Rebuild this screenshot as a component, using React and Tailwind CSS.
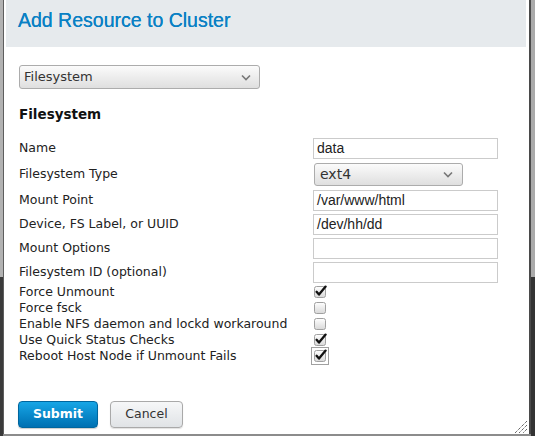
import React from "react";

function Chevron() {
  return (
    <svg width="10" height="7" viewBox="0 0 10 7" className="shrink-0">
      <path d="M1 1.5 L5 5.5 L9 1.5" fill="none" stroke="#777" strokeWidth="1.6" />
    </svg>
  );
}

function Checkbox({ checked, focus }) {
  const box = (
    <svg width="14" height="14" viewBox="0 0 14 14" className="block">
      <defs>
        <linearGradient id="cbg" x1="0" y1="0" x2="0" y2="1">
          <stop offset="0" stopColor="#ffffff" />
          <stop offset="1" stopColor="#d8d8d8" />
        </linearGradient>
      </defs>
      <rect x="1.5" y="1.5" width="11" height="11" rx="2" fill="url(#cbg)" stroke="#a0a0a0" strokeWidth="1" />
      {checked && (
        <path d="M3.6 6.8 L6 9.6 L12.6 1.6" fill="none" stroke="#111" strokeWidth="2.3" strokeLinecap="round" strokeLinejoin="round" />
      )}
    </svg>
  );
  if (!focus) return box;
  return (
    <div className="relative">
      {box}
      <div className="absolute -left-[2px] -top-[2px] w-[18px] h-[18px] border border-[#a0a0a0]" />
    </div>
  );
}

const fields = [
  { label: "Name", kind: "input", value: "data", row: "h-[24px]" },
  { label: "Filesystem Type", kind: "select", value: "ext4", row: "h-[28px]" },
  { label: "Mount Point", kind: "input", value: "/var/www/html", row: "h-[24px]" },
  { label: "Device, FS Label, or UUID", kind: "input", value: "/dev/hh/dd", row: "h-[24px]" },
  { label: "Mount Options", kind: "input", value: "", row: "h-[24px]" },
  { label: "Filesystem ID (optional)", kind: "input", value: "", row: "h-[24px]" },
];

const checks = [
  { label: "Force Unmount", checked: true },
  { label: "Force fsck", checked: false },
  { label: "Enable NFS daemon and lockd workaround", checked: false },
  { label: "Use Quick Status Checks", checked: true },
  { label: "Reboot Host Node if Unmount Fails", checked: true, focus: true },
];

export default function App() {
  return (
    <div className="w-[535px] h-[436px] overflow-hidden flex items-start bg-[#8c8c8c] font-['DejaVu_Sans',sans-serif]">
      <div className="w-[3px] h-[436px] flex flex-col shrink-0">
        <div className="h-[277px] bg-[#b2b2b2]" />
        <div className="flex-1 bg-[#3a3a3a]" />
      </div>

      <div className="relative w-[528px] h-[434px] shrink-0 bg-white border-l border-l-[#5e5e5e] border-r-2 border-r-[#4a4a4a] pl-[2px] pr-[3px] flex flex-col">
        <div className="h-[47px] bg-[#e6eaed] pl-[12px] pt-[7px]">
          <div className="font-['Liberation_Sans',Arial,sans-serif] text-[19.5px] leading-[26px] text-[#0a80c4] [text-shadow:0_0_0.4px_#0a80c4]">
            Add Resource to Cluster
          </div>
        </div>

        <div className="pl-[13px] flex flex-col">
          <div className="mt-[18px] w-[241px] h-[24px] rounded-[3px] border border-[#acacac] bg-linear-to-b from-[#fbfbfb] to-[#dfdfdf] flex items-center justify-between pl-[4px] pr-[8px] text-[13px] text-[#333]">
            <span>Filesystem</span>
            <Chevron />
          </div>

          <div className="mt-[15px] h-[20px] text-[13.5px] leading-[20px] font-bold text-[#111]">Filesystem</div>

          <div className="mt-[12px] flex flex-col">
            {fields.map((f) => (
              <div key={f.label} className={`flex items-center ${f.row}`}>
                <div className="w-[294px] text-[12.5px] text-[#222]">{f.label}</div>
                {f.kind === "input" ? (
                  <div className="w-[185px] h-[21px] border border-[#cbcbcb] bg-white px-[3px] flex items-center font-['Liberation_Sans',Arial,sans-serif] text-[14px] text-[#222]">
                    {f.value}
                  </div>
                ) : (
                  <div className="ml-[1px] w-[149px] h-[23px] rounded-[3px] border border-[#acacac] bg-linear-to-b from-[#fbfbfb] to-[#dfdfdf] flex items-center justify-between pl-[5px] pr-[9px] text-[14px] text-[#333]">
                    <span>{f.value}</span>
                    <Chevron />
                  </div>
                )}
              </div>
            ))}
            {checks.map((c) => (
              <div key={c.label} className="flex items-center h-[16px]">
                <div className="w-[294px] text-[12.5px] text-[#222]">{c.label}</div>
                <div>
                  <Checkbox checked={c.checked} focus={c.focus} />
                </div>
              </div>
            ))}
          </div>

          <div className="mt-[37px] flex gap-[12px] -ml-[1px]">
            <button className="w-[80px] h-[27px] rounded-[4px] border border-[#00669e] bg-linear-to-b from-[#17a6e6] to-[#0070b2] text-white font-bold text-[12.5px] shadow-[0_1px_1px_rgba(0,0,0,0.2)]">
              Submit
            </button>
            <button className="w-[73px] h-[27px] rounded-[4px] border border-[#a9a9a9] bg-linear-to-b from-[#f6f7f8] to-[#e0e3e6] text-[#333] text-[12.5px] shadow-[0_1px_1px_rgba(0,0,0,0.12)]">
              Cancel
            </button>
          </div>
        </div>

        <svg width="12" height="12" viewBox="0 0 12 12" className="absolute right-[2px] bottom-[1px]">
          <path d="M12 0 L0 12 M12 4 L4 12 M12 8 L8 12" stroke="#222" strokeWidth="1" strokeDasharray="1 1" />
        </svg>
      </div>

      <div className="w-[4px] h-[436px] flex flex-col shrink-0">
        <div className="h-[277px] bg-[#aaaaaa]" />
        <div className="flex-1 bg-[#333333]" />
      </div>
    </div>
  );
}
